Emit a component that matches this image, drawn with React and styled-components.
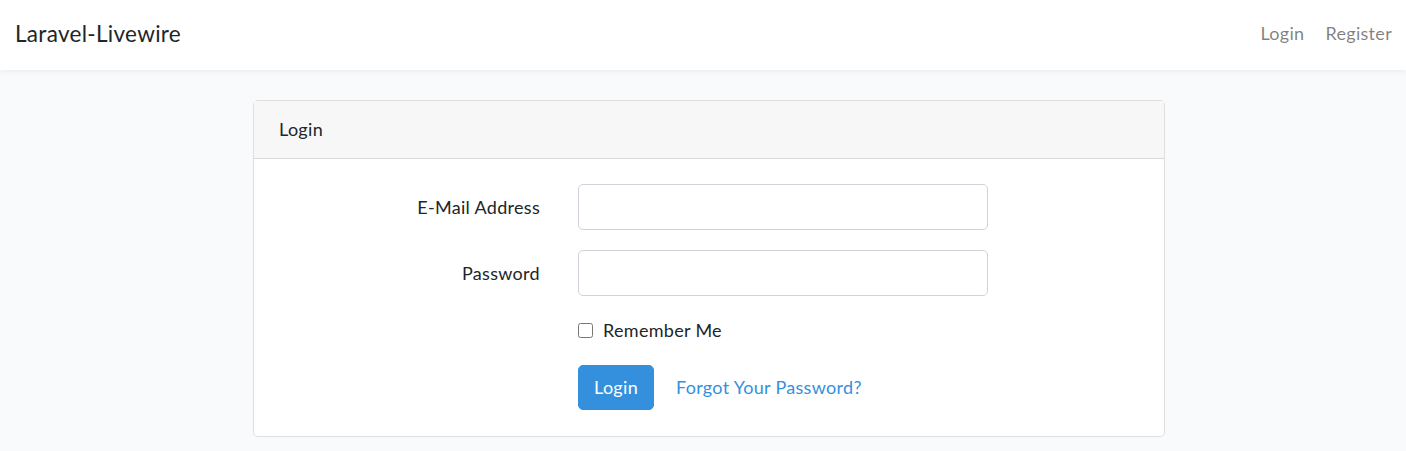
import React from 'react'
import styled, { createGlobalStyle } from 'styled-components'

const GlobalStyle = createGlobalStyle`
    * { box-sizing: border-box; }
    body {
        margin: 0;
        background: #f8fafc;
        font-family: Lato, "Noto Sans", sans-serif;
        font-size: 18px;
        line-height: 1.6;
        letter-spacing: 0.3px;
        color: #212529;
    }
`

const Navbar = styled.nav`
    display: flex;
    align-items: center;
    justify-content: space-between;
    height: 70px;
    padding: 0 14px 3px 15px;
    background: #fff;
    box-shadow: 0 2px 5px rgba(0, 0, 0, 0.05);
`
const Brand = styled.a`
    font-size: 22.5px;
    color: #212529;
    text-decoration: none;
`
const NavLinks = styled.div`
    display: flex;
    gap: 21px;
`
const NavLink = styled.a`
    color: rgba(0, 0, 0, 0.5);
    text-decoration: none;
`
const Main = styled.main`
    display: flex;
    justify-content: center;
    padding: 30px 0 0 12px;
`
const Card = styled.div`
    width: 912px;
    background: #fff;
    border: 1px solid rgba(0, 0, 0, 0.125);
    border-radius: 5px;
`
const CardHeader = styled.div`
    height: 58px;
    display: flex;
    align-items: center;
    padding: 0 25px;
    background: #f7f7f7;
    border-bottom: 1px solid rgba(0, 0, 0, 0.125);
`
const CardBody = styled.div`
    padding: 25px 25px 26px;
`
const FormRow = styled.div`
    display: grid;
    grid-template-columns: 261px 410px;
    column-gap: 38px;
    align-items: center;
    margin-bottom: ${p => p.last ? 0 : 20}px;
`
const Label = styled.label`
    text-align: right;
`
const Input = styled.input`
    width: 100%;
    height: 46px;
    border: 1px solid #ced4da;
    border-radius: 5px;
    background: #fff;
    font: inherit;
    padding: 0 15px;
`
const Check = styled.label`
    grid-column: 2;
    display: flex;
    align-items: center;
    gap: 10px;
    height: 29px;
`
const CheckBox = styled.input`
    width: 15px;
    height: 15px;
    margin: 0;
`
const Actions = styled.div`
    grid-column: 2;
    display: flex;
    align-items: center;
    gap: 22px;
`
const Button = styled.button`
    height: 45px;
    padding: 0 15px;
    background: #3490dc;
    border: 1px solid #3490dc;
    border-radius: 5px;
    color: #fff;
    font: inherit;
    letter-spacing: inherit;
`
const Link = styled.a`
    color: #3490dc;
    text-decoration: none;
`

export default function App() {
    return (
        <>
            <GlobalStyle />
            <Navbar>
                <Brand href="#">Laravel-Livewire</Brand>
                <NavLinks>
                    <NavLink href="#">Login</NavLink>
                    <NavLink href="#">Register</NavLink>
                </NavLinks>
            </Navbar>
            <Main>
                <Card>
                    <CardHeader>Login</CardHeader>
                    <CardBody>
                        <FormRow>
                            <Label>E-Mail Address</Label>
                            <Input type="email" />
                        </FormRow>
                        <FormRow>
                            <Label>Password</Label>
                            <Input type="password" />
                        </FormRow>
                        <FormRow>
                            <Check>
                                <CheckBox type="checkbox" />
                                Remember Me
                            </Check>
                        </FormRow>
                        <FormRow last>
                            <Actions>
                                <Button>Login</Button>
                                <Link href="#">Forgot Your Password?</Link>
                            </Actions>
                        </FormRow>
                    </CardBody>
                </Card>
            </Main>
        </>
    )
}
